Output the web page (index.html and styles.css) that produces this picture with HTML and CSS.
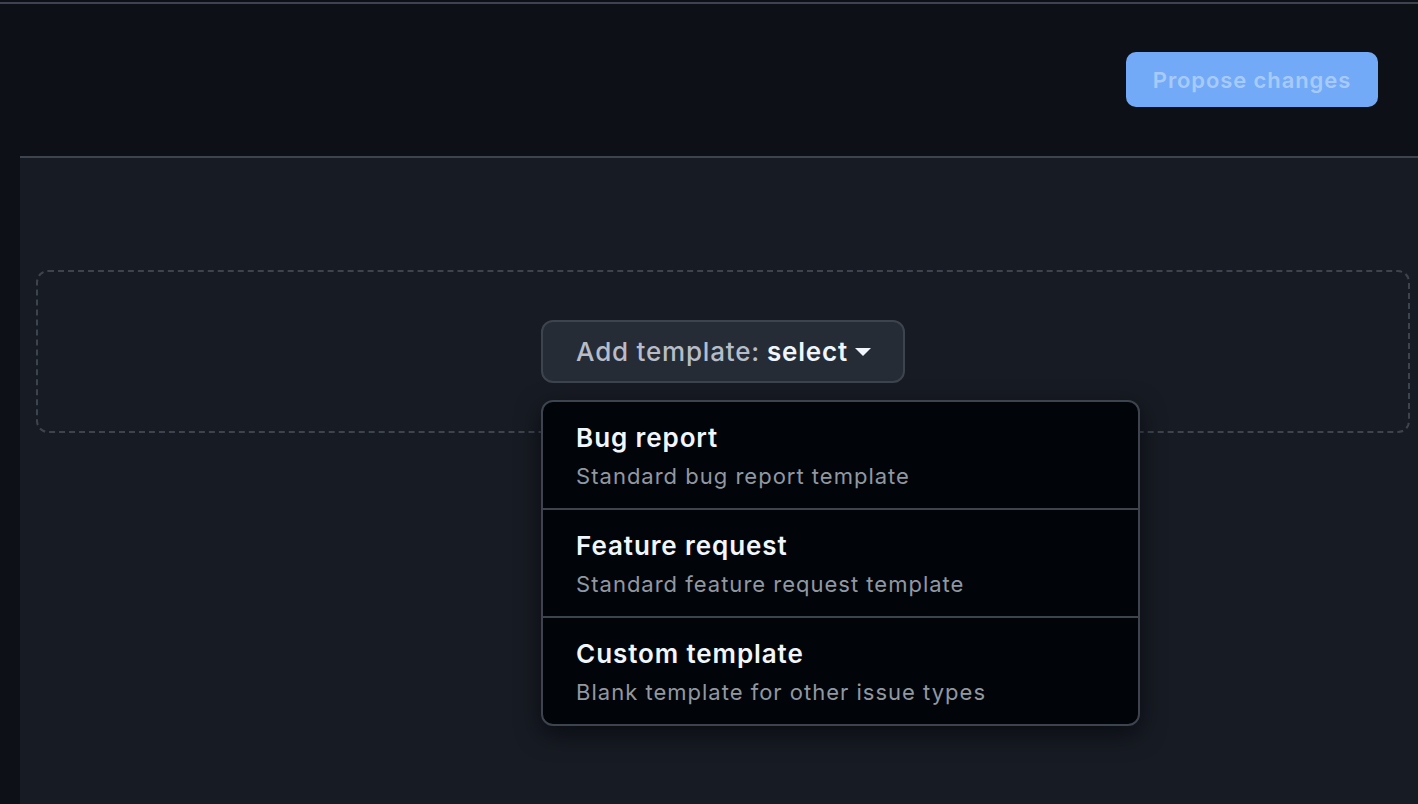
FILE: index.html
```html
<!DOCTYPE html>
<html lang="en">
<head>
    <meta charset="UTF-8">
    <meta name="viewport" content="width=device-width, initial-scale=1.0">
    <title>Issue templates</title>
    <link rel="stylesheet" href="styles.css">
</head>
<body>
    <header class="header">
        <button class="propose-btn" disabled>Propose changes</button>
    </header>

    <main class="panel">
        <div class="drop-zone">
            <div class="select-wrap">
                <button class="select-btn">
                    <span class="select-label">Add template:</span>
                    <span class="select-value">select</span>
                    <svg class="caret" width="16" height="8" viewBox="0 0 16 8"><path d="M0 0h16L8 8z" fill="#f0f6fc"/></svg>
                </button>

                <ul class="menu">
                    <li class="menu-item">
                        <div class="menu-title">Bug report</div>
                        <div class="menu-desc">Standard bug report template</div>
                    </li>
                    <li class="menu-item">
                        <div class="menu-title">Feature request</div>
                        <div class="menu-desc">Standard feature request template</div>
                    </li>
                    <li class="menu-item">
                        <div class="menu-title">Custom template</div>
                        <div class="menu-desc">Blank template for other issue types</div>
                    </li>
                </ul>
            </div>
        </div>
    </main>
</body>
</html>
```

FILE: styles.css
```css
html, body {
    height: 100%;
}
body {
    margin: 0;
    padding-top: 2px;
    box-sizing: border-box;
    background-color: #0d1117;
    font-family: Inter, 'Liberation Sans', sans-serif;
    color: #f0f6fc;
    display: flex;
    flex-direction: column;
    overflow: hidden;
}
.header {
    border-top: 2px solid #3d444d;
    height: 154px;
    flex-shrink: 0;
    padding: 48px 40px 0 0;
    box-sizing: border-box;
    display: flex;
    justify-content: flex-end;
    align-items: flex-start;
}
.propose-btn {
    width: 252px;
    height: 55px;
    border: none;
    border-radius: 10px;
    background-color: #72aaf8;
    color: #a8caf9;
    font-family: inherit;
    font-size: 22px;
    font-weight: 600;
    letter-spacing: 0.9px;
}
.panel {
    flex: 1;
    margin-left: 20px;
    border-top: 2px solid #3d444d;
    background-color: #171b23;
    padding: 112px 8px 0 16px;
}
.drop-zone {
    height: 163px;
    box-sizing: border-box;
    border: 2px dashed #3d444d;
    border-radius: 12px;
    display: flex;
    justify-content: center;
    align-items: center;
}
.select-wrap {
    position: relative;
}
.select-btn {
    height: 63px;
    padding: 0 32px 0 33px;
    background-color: #262c36;
    border: 2px solid #3d444d;
    border-radius: 12px;
    font-family: inherit;
    font-size: 26px;
    font-weight: 500;
    letter-spacing: 0.8px;
    display: flex;
    align-items: center;
    gap: 7px;
    cursor: pointer;
}
.select-label {
    color: #b7bdc8;
}
.select-value {
    color: #f0f6fc;
    font-weight: 600;
}
.menu {
    position: absolute;
    top: 80px;
    left: 0;
    width: 599px;
    margin: 0;
    padding: 0;
    list-style: none;
    background-color: #010409;
    border: 2px solid #3d444d;
    border-radius: 12px;
    box-shadow: 0 8px 24px rgba(1, 4, 9, 0.6);
    box-sizing: border-box;
    overflow: hidden;
}
.menu-item {
    padding: 19px 33px 16px;
    height: 106px;
    box-sizing: border-box;
}
.menu-item + .menu-item {
    border-top: 2px solid #3d444d;
    height: 108px;
}
.menu-title {
    font-size: 26px;
    font-weight: 600;
    line-height: 34px;
    letter-spacing: 0.9px;
    color: #f0f6fc;
}
.menu-desc {
    margin-top: 4px;
    font-size: 22px;
    line-height: 34px;
    letter-spacing: 1px;
    color: #9198a1;
}
```
